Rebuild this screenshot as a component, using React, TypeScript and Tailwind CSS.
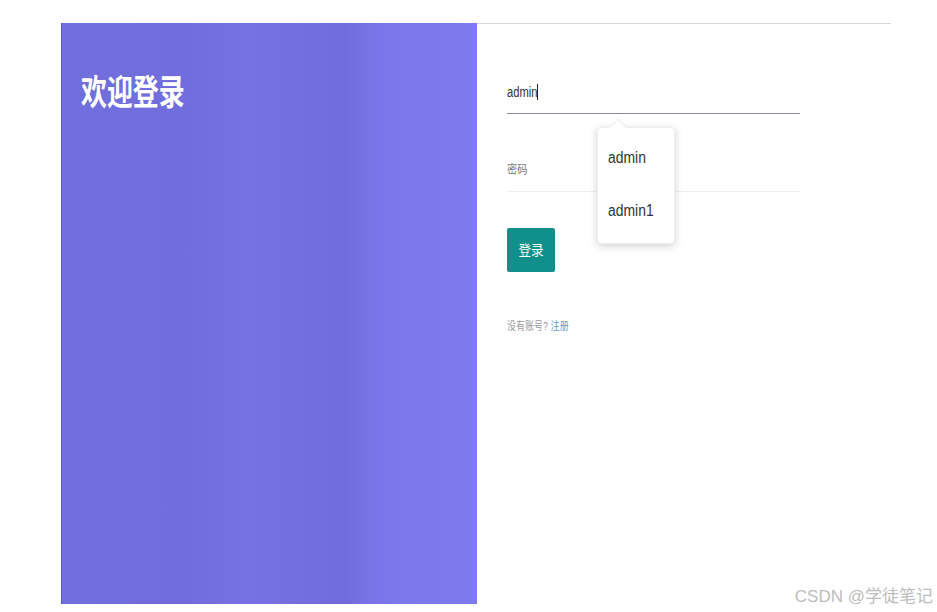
import React from 'react';

const cjk = "font-['Liberation_Sans','Noto_Sans_CJK_SC',sans-serif]";

function Suggestions() {
  return (
    <div className="absolute left-[120px] top-[103px] w-[78px] h-[117px] bg-white rounded-[4px] shadow-[0_2px_8px_rgba(0,0,0,0.18)] border border-[#eee]">
      <div className="absolute -top-[7px] left-[14px] w-[12px] h-[12px] bg-white rotate-45 border-l border-t border-[#eee]" />
      <div className="relative pt-[19px] pl-[10px] text-[16px] leading-[22px] text-[#333]">
        <div className="scale-x-[0.87] origin-left">admin</div>
        <div className="mt-[31px] scale-x-[0.87] origin-left">admin1</div>
      </div>
    </div>
  );
}

export default function App() {
  return (
    <div className={`relative w-[937px] h-[612px] bg-white pl-[61px] pt-[23px] ${cjk}`}>
      <div className="flex w-[830px] h-[581px]">
        <div className="w-[416px] h-full border-l border-[#5a56b8] bg-[linear-gradient(90deg,#716edd_0%,#716ddc_30%,#7672e3_45%,#706cdb_68%,#7874e6_74%,#7b78ec_80%,#7d7bee_100%)] pl-[19px] pt-[50px]">
          <h1 className="text-white font-bold text-[35px] leading-[40px] scale-x-[0.74] origin-left whitespace-nowrap">
            欢迎登录
          </h1>
        </div>

        <div className="relative flex-1 border-t border-[#d8d8d8] pl-[30px] pt-[47px]">
          <div className="w-[293px]">
            <div className="h-[43px] border-b border-[#8a89a0] flex items-center">
              <span className="inline-block text-[14px] text-[#333] scale-x-[0.8] origin-left w-[30px] whitespace-nowrap">admin</span>
              <span className="w-px h-[16px] bg-[#222]" />
            </div>
            <div className="mt-[35px] h-[43px] border-b border-[#eeeeee] flex items-center">
              <span className="inline-block text-[12px] text-[#777] scale-x-[0.85] origin-left">密码</span>
            </div>
            <button className="mt-[36px] w-[48px] h-[44px] bg-[#10908b] text-white text-[14px] rounded-[2px]">
              <span className="inline-block scale-x-[0.9]">登录</span>
            </button>
            <p className="mt-[46px] text-[11px] leading-[16px] text-[#999] scale-x-[0.82] origin-left whitespace-nowrap">
              没有账号? <span className="text-[#5b9bd5]">注册</span>
            </p>
          </div>
          <Suggestions />
        </div>
      </div>

      <div className="absolute right-[4px] bottom-[5px] text-[17px] leading-[20px] text-[#bdbdbd]">
        CSDN @学徒笔记
      </div>
    </div>
  );
}
